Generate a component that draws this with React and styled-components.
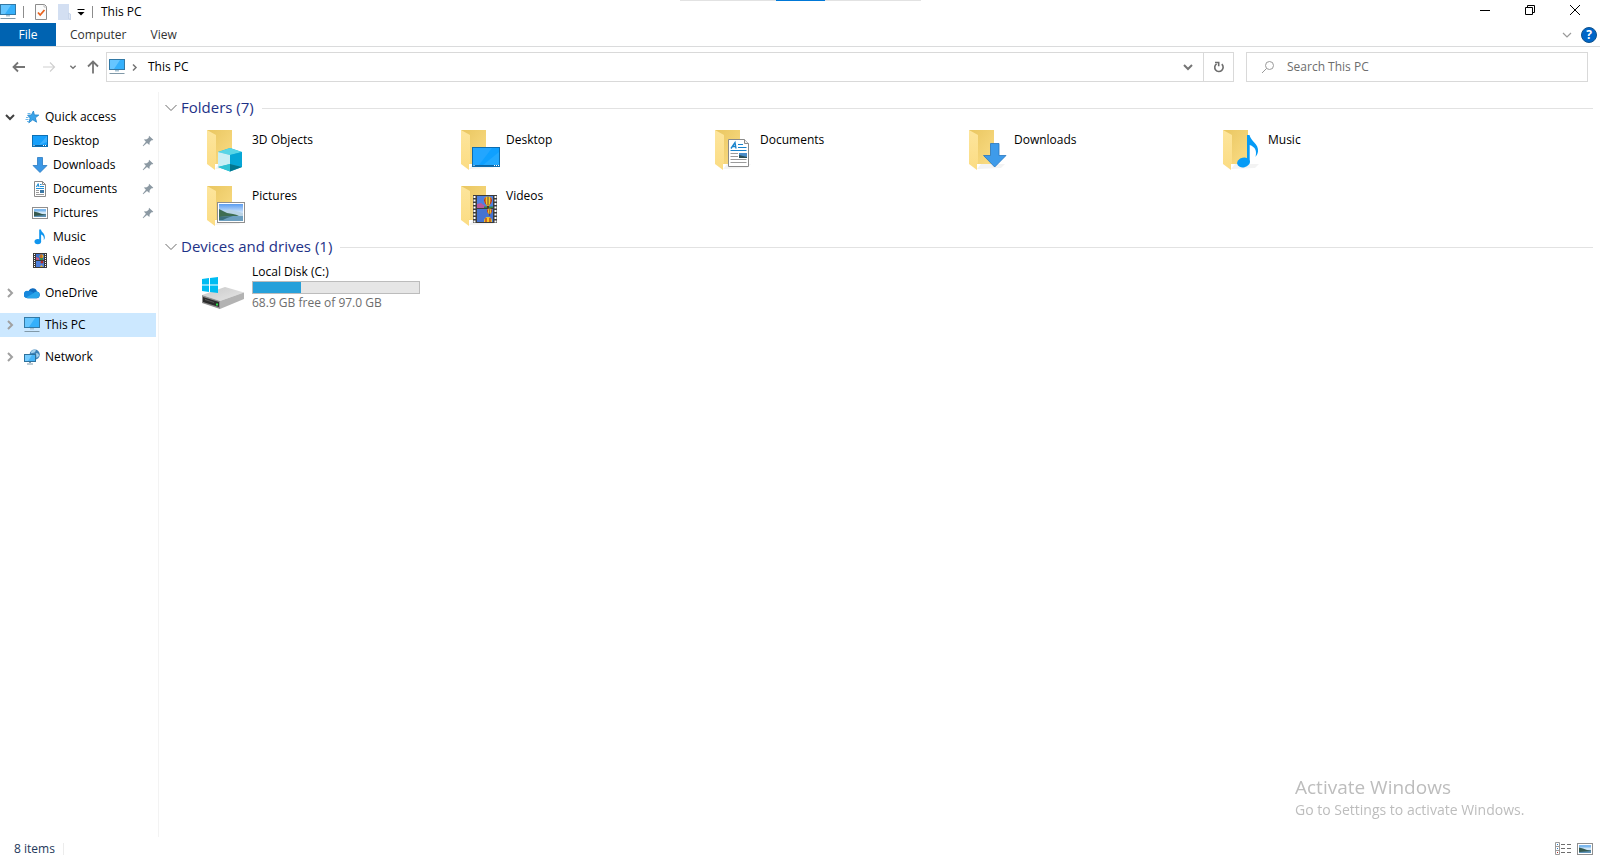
import React, { useState } from "react";
import styled, { createGlobalStyle } from "styled-components";

const GlobalStyle = createGlobalStyle`
  * {
    box-sizing: border-box;
  }
  body {
    margin: 0;
    background: #fff;
    color: #000;
    font-family: "Open Sans", "Noto Sans", sans-serif;
    font-size: 12px;
    line-height: 16px;
  }
  button, input {
    font: inherit;
    color: inherit;
    border: 0;
    padding: 0;
    background: none;
  }
  a {
    color: inherit;
    text-decoration: none;
  }
  svg {
    display: block;
    flex: none;
  }
`;

/* ---------- small icons, 16 x 16 ---------- */

const Svg = ({ size = 16, box = 16, children, ...rest }) => (
  <svg width={size} height={size} viewBox={`0 0 ${box} ${box}`} aria-hidden="true" {...rest}>
    {children}
  </svg>
);

const Chevron = ({ dir = "down", color = "#8a8a8a", width = 1.2, size = 12 }) => {
  const d = dir === "down" ? "M2 4 L6 8 L10 4" : "M4 2 L8 6 L4 10";
  return (
    <Svg size={size} box={12}>
      <path d={d} fill="none" stroke={color} strokeWidth={width} />
    </Svg>
  );
};

const GroupChevron = ({ open }) => (
  <Svg size={12} box={12}>
    <path d={open ? "M0.5 3 L6 8.5 L11.5 3" : "M3.5 0.5 L9 6 L3.5 11.5"} fill="none" stroke="#6d6d6d" />
  </Svg>
);

const PcIcon = () => (
  <Svg>
    <rect x="0.5" y="0.5" width="15" height="10" fill="#35b0fb" stroke="#3279a6" />
    <path d="M1 1 H11 L5 10 H1 Z" fill="#66c6ff" />
    <rect x="6" y="11" width="4" height="1.5" fill="#a9c4d4" />
    <path d="M0.5 14.5 H15.5" stroke="#8199a8" />
  </Svg>
);

const StarIcon = () => (
  <Svg>
    <path
      d="M9.4 2 L10.4 5.9 L14.8 6.1 L11.4 8.8 L12.6 13.2 L8.8 10.8 L4.8 13.8 L6.2 9 L3.6 6.2 L7.4 5.9 Z"
      fill="#3ba4ea"
      stroke="#1f83c9"
      strokeWidth="0.8"
    />
    <path d="M3.5 4.5 H6.5 M2 8.5 H4.5 M1.5 10.5 H4.5 M3 12.5 H5" stroke="#6db8ea" />
  </Svg>
);

const DesktopIcon = () => (
  <Svg>
    <rect x="0.5" y="2.5" width="15" height="11" fill="#17a0fb" stroke="#0c70b5" />
    <path d="M15 3 V9 L7 12 Z" fill="#3bb0ff" />
    <path d="M1 12.5 H15" stroke="#0c62a0" />
    <path d="M1.5 12.5 H2.5 M11 12.5 H12 M13 12.5 H14" stroke="#fff" />
  </Svg>
);

const DownIcon = () => (
  <Svg>
    <path d="M5.5 0.5 H10.5 V8.5 H15 L8 15.5 L1 8.5 H5.5 Z" fill="#3b97e5" stroke="#2a7ac2" strokeWidth="0.8" />
  </Svg>
);

const DocIcon = () => (
  <Svg>
    <path d="M2.5 0.5 H10.5 L13.5 3.5 V15.5 H2.5 Z" fill="#fff" stroke="#8a8a8a" />
    <path d="M10.5 0.5 V3.5 H13.5" fill="none" stroke="#8a8a8a" />
    <path d="M4.3 6 L6.2 2.6 L7 6 M5 4.8 H7 M8 3.5 H9.6 M8 5.5 H12 M4 7.5 H12" fill="none" stroke="#1e8fd8" />
    <path d="M4 9.5 H7 M4 11.5 H7 M4 13.5 H12" stroke="#9a9a9a" />
    <rect x="8" y="9" width="4" height="3" fill="#3b78a6" />
  </Svg>
);

const PictureIcon = () => (
  <Svg>
    <rect x="0.5" y="2.5" width="15" height="11" fill="#fff" stroke="#8f8f8f" />
    <rect x="2" y="4" width="12" height="8" fill="#7db8ee" />
    <path d="M2 6.5 H14 V9 H2 Z" fill="#cfe6f7" />
    <path d="M2 6.5 L6 7.5 L10 9 L14 9.6 V12 H2 Z" fill="#35594f" />
    <path d="M2 11 L14 10 V12 H2 Z" fill="#5f93b8" />
  </Svg>
);

const MusicIcon = () => (
  <Svg>
    <ellipse cx="5.8" cy="12.6" rx="3.3" ry="2.7" fill="#1095ee" />
    <path d="M7.2 0.5 H9 C9.2 3.4 13.4 4.4 12.8 9 C12.6 10 12.2 10.6 11.7 11 C12.4 8.2 11.2 6.4 9.1 5.6 V12.6 H7.2 Z" fill="#1095ee" />
  </Svg>
);

const VideoIcon = () => (
  <Svg>
    <rect x="1" y="0" width="14" height="15" fill="#3a3a3a" />
    <path d="M2.5 1 V15 M13.5 1 V15" stroke="#fff" strokeDasharray="1 1" />
    <rect x="4" y="1" width="8" height="6" fill="#3f70cc" />
    <rect x="4" y="8" width="8" height="6" fill="#4c80dd" />
    <path d="M4 4 L7 5 V7 H4 Z" fill="#c25a80" />
    <circle cx="9.5" cy="3.3" r="2" fill="#d8a626" />
    <path d="M9 1.5 V5.5" stroke="#b02a22" />
    <rect x="8" y="5" width="3" height="2" fill="#3d8a45" />
    <circle cx="10" cy="9.2" r="1.4" fill="#b02a22" />
    <path d="M8 14 Q9.5 10.5 11 14 Z" fill="#e3b62d" />
  </Svg>
);

const CloudIcon = () => (
  <Svg>
    <path d="M4.5 6 A4.6 4.6 0 0 1 13 6.4 A3.5 3.5 0 0 1 12.8 13.3 H3.6 A3.6 3.6 0 0 1 4.5 6 Z" fill="#0f6cbf" />
    <path d="M4.5 6 C6.6 5.6 8 7 9.8 8 L2 12.8 A3.6 3.6 0 0 1 4.5 6 Z" fill="#1687dc" />
    <path d="M2 12.6 L9.6 8 C11 7 12.2 6.4 13.2 6.6 A3.5 3.5 0 0 1 12.8 13.3 H3.6 Z" fill="#28a4ea" />
  </Svg>
);

const NetworkIcon = () => (
  <Svg>
    <circle cx="10.7" cy="5.6" r="5.1" fill="#3d82b8" />
    <path d="M7.5 2 Q10 0 12 1.5 Q11 4 8.5 4 Q6 5 7.5 2 Z M12 4 Q15 4 15 7 L12.5 9 Z" fill="#a5d1ec" />
    <rect x="0.5" y="5.5" width="11" height="7" fill="#48b5f8" stroke="#2e719c" />
    <path d="M1 6 H8 L4 12 H1 Z" fill="#76ccff" />
    <path d="M5 13.5 H7 M3 15 H9" stroke="#7f9aab" />
  </Svg>
);

const PinIcon = () => (
  <Svg size={12} box={12}>
    <path d="M7 0.8 L11.3 4.8 L10 5.4 L9.4 5.2 L7.7 7.2 L7.4 10 L5 7.9 L1.2 11.2 L0.7 10.7 L3.9 6.8 L1.8 4.5 L4.8 4.2 L6.7 2.7 Z" fill="#8c99a3" />
  </Svg>
);

const CheckDocIcon = () => (
  <Svg>
    <path d="M2.5 0.5 H11.5 L13.5 2.5 V15.5 H2.5 Z" fill="#fbfbfb" stroke="#8c8c8c" />
    <path d="M11 0.5 V3 H13.5" fill="none" stroke="#bcbcbc" />
    <path d="M5 8.5 L7.2 11 L11.5 6" fill="none" stroke="#e8611c" strokeWidth="1.8" />
  </Svg>
);

const NewFolderIcon = () => (
  <Svg>
    <path d="M2 0 H13 V9 L15 10 V16 H2 Z" fill="#d3dff2" />
    <path d="M12.5 9 V14.5 L14.5 15.5 V10.5 Z" fill="#dfe8f6" stroke="#bccbe2" strokeWidth="0.6" />
  </Svg>
);

const arrowPaths = {
  left: "M14 8 H2.5 M7 3.5 L2.5 8 L7 12.5",
  right: "M2 8 H13.5 M9 3.5 L13.5 8 L9 12.5",
  up: "M8 14.5 V3 M3 7.5 L8 2.5 L13 7.5",
};

const ArrowIcon = ({ dir, color }) => (
  <Svg>
    <path d={arrowPaths[dir]} fill="none" stroke={color} strokeWidth={dir === "right" ? 1.2 : 1.8} />
  </Svg>
);

/* ---------- folder icons, 48 x 48 ---------- */

const FolderIcon = ({ children }) => (
  <Svg size={48} box={48}>
    <defs>
      <linearGradient id="folderBack" x1="0" y1="0" x2="1" y2="1">
        <stop offset="0" stopColor="#e9c660" />
        <stop offset="1" stopColor="#fbdd86" />
      </linearGradient>
      <linearGradient id="folderFlap" x1="0" y1="0" x2="0" y2="1">
        <stop offset="0" stopColor="#fde59c" />
        <stop offset="1" stopColor="#fbdc83" />
      </linearGradient>
    </defs>
    <path d="M16 43 L20 38 H44 L40 42 Z" fill="#f3f3f3" />
    <path d="M8 4 H33 V38 H16 Z" fill="url(#folderBack)" />
    <path d="M8 4 L17 9 V37 L16 38 V44 L8 38 Z" fill="url(#folderFlap)" />
    {children}
  </Svg>
);

const CubeOverlay = () => (
  <>
    <path d="M31 22 L43 26 V41 L31 45.5 L19 41 V26 Z" fill="#1fb5d4" />
    <path d="M31 22 L43 26 L31 29 L19 26 Z" fill="#58d5e6" />
    <path d="M19 26 L31 29 V38 L19 41 Z" fill="#c9eff5" />
    <path d="M31 29 L43 26 V41 L31 38 Z" fill="#06a6d6" />
    <path d="M19 41 L31 38 V45.5 Z" fill="#30c3d4" />
    <path d="M31 38 L43 41 L31 45.5 Z" fill="#02768f" />
  </>
);

const DesktopOverlay = () => (
  <>
    <rect x="19.5" y="21.5" width="27" height="19" fill="#0fa0ff" stroke="#0d6db0" />
    <path d="M20 22 H39 L26 39 H20 Z" fill="#23a6ff" />
    <path d="M46 26 V39 H30 Z" fill="#22a9ff" />
    <path d="M20 39.5 H46" stroke="#0c66a5" />
    <path d="M20.5 39.5 H21.5 M41 39.5 H42 M43 39.5 H44 M45 39.5 H46" stroke="#fff" />
  </>
);

const DocumentOverlay = () => (
  <>
    <path d="M21.5 13.5 H37.5 L41.5 17.5 V40.5 H21.5 Z" fill="#fff" stroke="#8a8a8a" />
    <path d="M37.5 13.5 V17.5 H41.5" fill="#eee" stroke="#8a8a8a" />
    <path d="M24 22.5 L28 16.5 L29 22.5 M26 20.5 H29" fill="none" stroke="#1983cc" strokeWidth="1.4" />
    <path d="M31 18.5 H36 M31 21.5 H39.5 M23.5 24.5 H39.5" stroke="#1983cc" />
    <path d="M23.5 27.5 H31 M23.5 30.5 H31 M23.5 33.5 H39.5 M23.5 36.5 H39.5" stroke="#9b9b9b" />
    <rect x="32" y="27" width="8" height="5" fill="#4a8cc8" />
    <path d="M32 29 L40 31 V32 H32 Z" fill="#294d54" />
  </>
);

const DownloadOverlay = () => (
  <path d="M29.5 17.5 H38 V29.5 H45 L33.7 41 L22.5 29.5 H29.5 Z" fill="#3e9bea" stroke="#2776bf" strokeWidth="0.8" />
);

const MusicOverlay = () => (
  <>
    <ellipse cx="28.5" cy="36.5" rx="6.5" ry="4.8" fill="#069bf6" transform="rotate(-12 28.5 36.5)" />
    <path d="M32 9 H34.5 C35.5 15 44 18 43 25.5 C42.6 28 41.5 29.5 40.5 31 C42 25 40.5 21 34.7 19 V36.5 H32 Z" fill="#069bf6" />
  </>
);

const PictureOverlay = () => (
  <>
    <defs>
      <linearGradient id="sky" x1="0" y1="0" x2="0" y2="1">
        <stop offset="0" stopColor="#5b9cf0" />
        <stop offset="1" stopColor="#e4f2fd" />
      </linearGradient>
    </defs>
    <rect x="18.5" y="20.5" width="27" height="20" fill="#fff" stroke="#8f8f8f" />
    <rect x="20" y="22" width="24" height="10" fill="url(#sky)" />
    <path d="M24 30 L30 27.5 L37 29 L44 31 V34 H20 V30 Z" fill="#b9d3e6" />
    <path d="M20 27 L24 29 L28 31 L34 32 L40 33.5 L32 35 H20 Z" fill="#3f6d52" />
    <path d="M20 35 L32 34 H44 V39 H20 Z" fill="#6d9fc0" />
    <path d="M20 35 L34 34 L28 36 L24 38 H20 Z" fill="#3c6f7c" />
  </>
);

const Balloon = ({ x, y, s = 1 }) => (
  <g transform={`translate(${x} ${y}) scale(${s})`}>
    <path d="M-4 0 A4 4 0 0 1 4 0 Q3.5 3 1 5.5 H-1 Q-3.5 3 -4 0 Z" fill="#f4c828" />
    <path d="M-4 0 A4 4 0 0 1 -2 -3.4 Q-3.4 1 -1 5.5 Q-3.500 3 -4 0 Z M4 0 A4 4 0 0 0 2 -3.4 Q3.4 1 1 5.5 Q3.5 3 4 0 Z" fill="#b4271f" />
    <path d="M0 -4 V5" stroke="#3a2b3c" strokeWidth="0.8" />
    <rect x="-1" y="5.5" width="2" height="2" fill="#5a3518" />
  </g>
);

const VideoOverlay = () => (
  <>
    <rect x="20" y="13" width="24" height="28" fill="#3c3c3c" />
    <path d="M21.5 14 V41 M42.5 14 V41" stroke="#fff" strokeWidth="2" strokeDasharray="2 1.5" />
    <rect x="24" y="14" width="16" height="12" fill="#4d7fe0" />
    <rect x="24" y="27" width="16" height="13" fill="#4473d2" />
    <path d="M24 22 L28 21 L32 24 L33 26 H24 Z" fill="#b75a9c" />
    <path d="M31 24.5 H40 V26 H31 Z" fill="#2f8a48" />
    <Balloon x={35} y={18.5} />
    <Balloon x={36.5} y={29} s={0.6} />
    <path d="M31 40 Q31 35 35 35 Q39 35 39 40 Z" fill="#f4c828" />
    <path d="M33 40 V36 M37 40 V36" stroke="#b4271f" strokeWidth="1.2" />
  </>
);

const DriveIcon = () => (
  <Svg size={48} box={48}>
    <defs>
      <linearGradient id="driveTop" x1="0" y1="0" x2="1" y2="1">
        <stop offset="0" stopColor="#c9c9c9" />
        <stop offset="1" stopColor="#e6e6e6" />
      </linearGradient>
    </defs>
    <path d="M3 26 L26 18 L45 23.5 L21 32 Z" fill="url(#driveTop)" />
    <path d="M45 23.5 V30 L21 40 V32 Z" fill="#b3b3b3" />
    <path d="M3 26 L21 32 V40 L3 34 Z" fill="#8d8d8d" />
    <path d="M4 28 L20 33 V38 L4 33 Z" fill="#2b2b2b" />
    <path d="M6 30.5 L15 33.5" stroke="#555" />
    <rect x="17" y="34.5" width="2" height="2" fill="#2fe04c" />
    <path d="M3 10 L10 9 V15.5 H3 Z M11 8.9 L19 8 V15.5 H11 Z M3 16.5 H10 V23 L3 22 Z M11 16.5 H19 V24 L11 23.1 Z" fill="#00bcf2" />
  </Svg>
);

/* ---------- window frame ---------- */

const Window = styled.div`
  display: flex;
  flex-direction: column;
  min-height: 100vh;
`;

const TopTab = styled.div`
  position: fixed;
  top: 0;
  left: 50%;
  width: 241px;
  height: 1px;
  margin-left: -120px;
  background: linear-gradient(to right, #e2e2e2 40%, #0078d7 40%, #0078d7 60%, #e2e2e2 60%);
`;

const TitleBar = styled.header`
  display: flex;
  align-items: center;
  height: 23px;
`;

const QuickTools = styled.div`
  display: flex;
  align-items: center;
  gap: 7px;
`;

const Separator = styled.span`
  width: 1px;
  height: 12px;
  background: ${(p) => p.$color || "#8c8c8c"};
`;

const IconButton = styled.button`
  display: flex;
  align-items: center;
  justify-content: center;
  flex: none;
  width: ${(p) => p.$width || 16}px;
  height: ${(p) => p.$height || 16}px;
`;

const Title = styled.h1`
  margin: 0 0 0 8px;
  font-size: 12px;
  font-weight: 400;
`;

const WindowButtons = styled.div`
  display: flex;
  margin-left: auto;
  padding: 0 3px 3px 0;
`;

const Ribbon = styled.nav`
  display: flex;
  align-items: center;
  height: 24px;
  border-bottom: 1px solid #dadbdc;
`;

const RibbonTab = styled.button`
  height: 23px;
  padding: 0 10px 0 14px;
  color: #333;

  ${(p) =>
    p.$active &&
    `
    width: 56px;
    padding: 0;
    color: #fff;
    background: #0063b1;
  `}
`;

const RibbonEnd = styled.div`
  display: flex;
  align-items: center;
  gap: 6px;
  margin-left: auto;
  padding-right: 3px;
`;

const Help = styled.button`
  width: 16px;
  height: 16px;
  border: 1px solid #10528c;
  border-radius: 50%;
  background: #0066c8;
  color: #fff;
  font-weight: 700;
  line-height: 14px;
`;

const NavRow = styled.div`
  display: flex;
  align-items: center;
  padding: 5px 12px 0 11px;
`;

const History = styled.div`
  display: flex;
  align-items: center;
  flex: none;
  width: 95px;
`;

const AddressBar = styled.div`
  display: flex;
  align-items: center;
  flex: 1124 1 0;
  height: 30px;
  padding-left: 2px;
  border: 1px solid #d9d9d9;
`;

const Crumb = styled.button`
  flex: 1;
  padding-left: 5px;
  text-align: left;
`;

const Refresh = styled(IconButton)`
  border-left: 1px solid #d9d9d9;
`;

const SearchBox = styled.label`
  display: flex;
  align-items: center;
  flex: 326 1 0;
  height: 30px;
  margin-left: 12px;
  padding-left: 14px;
  gap: 12px;
  border: 1px solid #d9d9d9;

  input {
    flex: 1;
    min-width: 0;
    outline: 0;
  }
  input::placeholder {
    color: #6d6d6d;
    opacity: 1;
  }
`;

const Body = styled.div`
  display: flex;
  flex: 1;
  padding-top: 10px;
`;

/* ---------- navigation pane ---------- */

const Sidebar = styled.nav`
  flex: none;
  width: 159px;
  padding: 13px 2px 0 0;
  border-right: 1px solid #f3f3f3;
`;

const TreeGroup = styled.ul`
  margin: 0 0 8px;
  padding: 0;
  list-style: none;
`;

const TreeItem = styled.a`
  display: flex;
  align-items: center;
  height: 24px;
  padding: 0 2px 0 ${(p) => (p.$child ? 32 : 4)}px;
  background: ${(p) => (p.$selected ? "#cce8ff" : "transparent")};

  &:hover {
    background: ${(p) => (p.$selected ? "#cce8ff" : "#e5f3ff")};
  }
`;

const TreeArrow = styled.span`
  width: 20px;
`;

const TreeLabel = styled.span`
  flex: 1;
  padding-left: 5px;
`;

/* ---------- content ---------- */

const Content = styled.main`
  flex: 1;
  min-width: 0;
  padding: 4px 7px 0 6px;
`;

const GroupHeader = styled.button`
  display: flex;
  align-items: center;
  width: 100%;
  height: 24px;
  gap: 4px;
  color: #1e3287;
  font-size: 15px;
  line-height: 22px;

  &::after {
    content: "";
    flex: 1;
    height: 1px;
    margin-left: 4px;
    background: #e2e2e2;
  }
`;

const GroupTitle = styled.span`
  padding-bottom: 2px;
`;

const Tiles = styled.div`
  display: grid;
  grid-template-columns: repeat(auto-fill, 254px);
  row-gap: 8px;
  padding: ${(p) => (p.$drives ? 10 : 6)}px 0 5px 34px;
`;

const Tile = styled.a`
  display: flex;
  gap: 5px;
  height: 48px;
`;

const TileName = styled.span`
  padding-top: 6px;
`;

const DriveInfo = styled.span`
  display: flex;
  flex-direction: column;
  width: 168px;
  margin-top: -5px;
`;

const Usage = styled.span`
  height: 13px;
  margin: 1px 0;
  border: 1px solid #bcbcbc;
  background: #e6e6e6;
`;

const UsageFill = styled.span`
  display: block;
  height: 100%;
  background: #26a0da;
`;

const FreeSpace = styled.span`
  color: #6d6d6d;
`;

const StatusBar = styled.footer`
  display: flex;
  align-items: center;
  height: 23px;
  padding: 0 7px 0 14px;
  gap: 8px;
  color: #1e395b;
`;

const ViewModes = styled.div`
  display: flex;
  gap: 6px;
  margin-left: auto;
`;

const Watermark = styled.div`
  position: fixed;
  right: 69px;
  bottom: 40px;
  width: 236px;
  color: #bdbdbd;
  font-size: 14px;
  line-height: 20px;
  white-space: nowrap;
  pointer-events: none;

  strong {
    display: block;
    font-size: 19px;
    font-weight: 400;
    line-height: 26px;
  }
`;

const quickAccess = [
  { name: "Desktop", Icon: DesktopIcon, pinned: true },
  { name: "Downloads", Icon: DownIcon, pinned: true },
  { name: "Documents", Icon: DocIcon, pinned: true },
  { name: "Pictures", Icon: PictureIcon, pinned: true },
  { name: "Music", Icon: MusicIcon },
  { name: "Videos", Icon: VideoIcon },
];

const roots = [
  { name: "OneDrive", Icon: CloudIcon },
  { name: "This PC", Icon: PcIcon },
  { name: "Network", Icon: NetworkIcon },
];

const folders = [
  { name: "3D Objects", Overlay: CubeOverlay },
  { name: "Desktop", Overlay: DesktopOverlay },
  { name: "Documents", Overlay: DocumentOverlay },
  { name: "Downloads", Overlay: DownloadOverlay },
  { name: "Music", Overlay: MusicOverlay },
  { name: "Pictures", Overlay: PictureOverlay },
  { name: "Videos", Overlay: VideoOverlay },
];

const drive = { name: "Local Disk (C:)", free: 68.9, total: 97 };

const Group = ({ title, drives, children }) => {
  const [open, setOpen] = useState(true);
  return (
    <section>
      <GroupHeader aria-expanded={open} onClick={() => setOpen(!open)}>
        <GroupChevron open={open} />
        <GroupTitle>{title}</GroupTitle>
      </GroupHeader>
      {open && <Tiles $drives={drives}>{children}</Tiles>}
    </section>
  );
};

const App = () => {
  const [selected, setSelected] = useState("This PC");
  const [query, setQuery] = useState("");
  const used = ((drive.total - drive.free) / drive.total) * 100;

  return (
    <Window>
      <GlobalStyle />
      <TitleBar>
        <QuickTools>
          <PcIcon />
          <Separator />
          <IconButton $width={20} aria-label="Properties">
            <CheckDocIcon />
          </IconButton>
          <IconButton $width={12} aria-label="New folder">
            <NewFolderIcon />
          </IconButton>
          <IconButton $width={8} aria-label="Customize Quick Access Toolbar">
            <Svg size={8} box={8}>
              <path d="M0.5 1.5 H7.5" stroke="#000" />
              <path d="M0.5 4 H7.5 L4 7.5 Z" />
            </Svg>
          </IconButton>
          <Separator />
        </QuickTools>
        <Title>This PC</Title>
        <WindowButtons>
          <IconButton $width={45} $height={20} aria-label="Minimize">
            <Svg size={10} box={10}>
              <path d="M0 5.5 H10" stroke="#000" />
            </Svg>
          </IconButton>
          <IconButton $width={45} $height={20} aria-label="Restore">
            <Svg size={10} box={10}>
              <path d="M0.5 2.5 H7.5 V9.5 H0.5 Z M2.5 2.5 V0.5 H9.5 V7.5 H7.5" fill="none" stroke="#000" />
            </Svg>
          </IconButton>
          <IconButton $width={45} $height={20} aria-label="Close">
            <Svg size={10} box={10}>
              <path d="M0 0 L10 10 M10 0 L0 10" stroke="#000" />
            </Svg>
          </IconButton>
        </WindowButtons>
      </TitleBar>

      <Ribbon>
        <RibbonTab $active>File</RibbonTab>
        <RibbonTab>Computer</RibbonTab>
        <RibbonTab>View</RibbonTab>
        <RibbonEnd>
          <IconButton aria-label="Expand the Ribbon">
            <Chevron color="#9a9a9a" />
          </IconButton>
          <Help aria-label="Help">?</Help>
        </RibbonEnd>
      </Ribbon>

      <NavRow>
        <History>
          <IconButton aria-label="Back">
            <ArrowIcon dir="left" color="#757575" />
          </IconButton>
          <IconButton $width={44} aria-label="Forward">
            <ArrowIcon dir="right" color="#d0d0d0" />
          </IconButton>
          <IconButton $width={4} aria-label="Recent locations">
            <Chevron color="#757575" width={2} size={8} />
          </IconButton>
          <IconButton $width={36} aria-label="Up">
            <ArrowIcon dir="up" color="#757575" />
          </IconButton>
        </History>
        <AddressBar>
          <PcIcon />
          <IconButton $width={18} aria-label="Show locations">
            <Chevron dir="right" color="#757575" width={2} size={9} />
          </IconButton>
          <Crumb>This PC</Crumb>
          <IconButton $width={30} $height={28} aria-label="Previous locations">
            <Chevron color="#757575" width={2} />
          </IconButton>
          <Refresh $width={30} $height={28} aria-label="Refresh">
            <Svg size={12} box={12}>
              <path d="M3.6 2.8 A4.2 4.2 0 1 0 8.8 3.2" fill="none" stroke="#6d6d6d" strokeWidth="1.6" />
              <path d="M2 1.5 H5.7 V5.2" fill="none" stroke="#6d6d6d" strokeWidth="1.6" />
            </Svg>
          </Refresh>
        </AddressBar>
        <SearchBox>
          <Svg size={14} box={14}>
            <circle cx="8.5" cy="5.5" r="4" fill="none" stroke="#9a9a9a" />
            <path d="M5.5 8.5 L1 13" stroke="#9a9a9a" />
          </Svg>
          <input
            type="text"
            aria-label="Search This PC"
            placeholder="Search This PC"
            value={query}
            onChange={(e) => setQuery(e.target.value)}
          />
        </SearchBox>
      </NavRow>

      <Body>
        <Sidebar>
          <TreeGroup>
            <li>
              <TreeItem href="#quick-access">
                <TreeArrow>
                  <Chevron color="#404040" width={2} />
                </TreeArrow>
                <StarIcon />
                <TreeLabel>Quick access</TreeLabel>
              </TreeItem>
            </li>
            {quickAccess.map(({ name, Icon, pinned }) => (
              <li key={name}>
                <TreeItem $child href={`#${name}`}>
                  <Icon />
                  <TreeLabel>{name}</TreeLabel>
                  {pinned && <PinIcon />}
                </TreeItem>
              </li>
            ))}
          </TreeGroup>
          {roots.map(({ name, Icon }) => (
            <TreeGroup key={name}>
              <li>
                <TreeItem href={`#${name}`} $selected={selected === name} onClick={() => setSelected(name)}>
                  <TreeArrow>
                    <Chevron dir="right" color="#a0a0a0" width={2} />
                  </TreeArrow>
                  <Icon />
                  <TreeLabel>{name}</TreeLabel>
                </TreeItem>
              </li>
            </TreeGroup>
          ))}
        </Sidebar>

        <Content>
          <Group title="Folders (7)">
            {folders.map(({ name, Overlay }) => (
              <Tile key={name} href={`#${name}`}>
                <FolderIcon>
                  <Overlay />
                </FolderIcon>
                <TileName>{name}</TileName>
              </Tile>
            ))}
          </Group>
          <Group title="Devices and drives (1)" drives>
            <Tile href="#c">
              <DriveIcon />
              <DriveInfo>
                <span>{drive.name}</span>
                <Usage>
                  <UsageFill style={{ width: `${used}%` }} />
                </Usage>
                <FreeSpace>
                  {drive.free} GB free of {drive.total.toFixed(1)} GB
                </FreeSpace>
              </DriveInfo>
            </Tile>
          </Group>
        </Content>
      </Body>

      <StatusBar>
        <span>8 items</span>
        <Separator $color="#ececec" />
        <ViewModes>
          <IconButton aria-label="Details">
            <Svg>
              <path d="M0.5 1.5 H4.5 V13.5 H0.5 Z M0.5 5.5 H4.5 M0.5 9.5 H4.5" fill="none" stroke="#9a9a9a" />
              <path d="M6 3.5 H10 M12 3.5 H16 M6 7.5 H10 M12 7.5 H16 M6 11.5 H10 M12 11.5 H16" stroke="#6d6d6d" />
              <path d="M2 3.5 H3 M2 7.5 H3" stroke="#2a7ac2" />
              <path d="M2 11.5 H3" stroke="#b4271f" />
            </Svg>
          </IconButton>
          <IconButton aria-label="Large icons">
            <PictureIcon />
          </IconButton>
        </ViewModes>
      </StatusBar>

      <TopTab />
      <Watermark>
        <strong>Activate Windows</strong>
        Go to Settings to activate Windows.
      </Watermark>
    </Window>
  );
};

export default App;
